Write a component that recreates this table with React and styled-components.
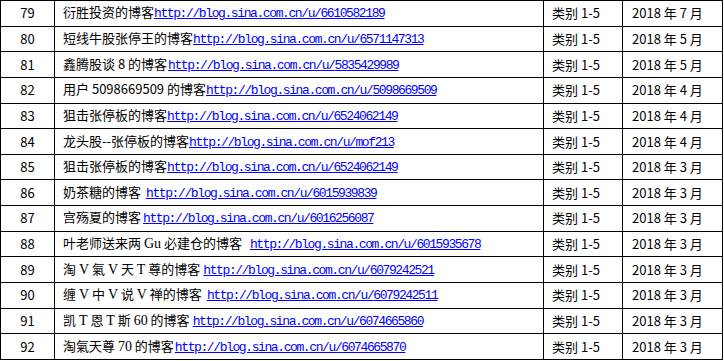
import React from 'react';
import styled, { createGlobalStyle } from 'styled-components';

const GlobalStyle = createGlobalStyle`
  html, body {
    margin: 0;
    padding: 0;
    background: #fff;
  }
  body {
    font-family: "Noto Sans CJK SC", "Liberation Sans", sans-serif;
    font-size: 13px;
    color: #000;
  }
`;

const Sheet = styled.table`
  border-collapse: collapse;
  table-layout: fixed;
  width: 723px;
  height: 360px;
`;

const Row = styled.tr`
  height: 25.64px;
`;

const Cell = styled.td`
  border: 1px solid #000;
  padding: 0 0 0 ${({ $pad }) => ($pad === undefined ? 8 : $pad)}px;
  text-align: ${({ $center }) => ($center ? 'center' : 'left')};
  vertical-align: middle;
  line-height: 16px;
  white-space: nowrap;
  overflow: hidden;
`;

const Link = styled.a`
  font-family: "Liberation Mono", "DejaVu Sans Mono", monospace;
  font-size: 13px;
  letter-spacing: -1.4px;
  color: #00f;
  text-decoration: underline;
  margin-left: ${({ $gap }) => $gap || 0}px;
`;

// the few latin bits that were typed in Times in the source doc
const Roman = styled.span`
  font-family: "Liberation Serif", serif;
  font-size: 14px;
`;

const rows = [
  { no: 79, name: '衍胜投资的博客', id: '6610582189', date: '2018 年 7 月' },
  { no: 80, name: '短线牛股张停王的博客', id: '6571147313', date: '2018 年 5 月' },
  { no: 81, name: '鑫腾股谈 8 的博客', id: '5835429989', date: '2018 年 5 月', gap: 1 },
  { no: 82, name: '用户 5098669509 的博客', id: '5098669509', date: '2018 年 4 月', gap: 0 },
  { no: 83, name: '狙击张停板的博客', id: '6524062149', date: '2018 年 4 月' },
  { no: 84, name: '龙头股--张停板的博客', id: 'mof213', date: '2018 年 4 月' },
  { no: 85, name: '狙击张停板的博客', id: '6524062149', date: '2018 年 3 月' },
  { no: 86, name: '奶茶糖的博客', id: '6015939839', date: '2018 年 3 月', gap: 5 },
  { no: 87, name: '宫殇夏的博客', id: '6016256087', date: '2018 年 3 月', gap: 2 },
  {
    no: 88,
    name: <>叶老师送来两 <Roman>Gu</Roman> 必建仓的博客</>,
    id: '6015935678',
    date: '2018 年 3 月',
    gap: 8,
  },
  {
    no: 89,
    name: <>淘 <Roman>V</Roman> 氣 <Roman>V</Roman> 天 <Roman>T</Roman> 尊的博客</>,
    id: '6079242521',
    date: '2018 年 3 月',
    gap: 3,
  },
  {
    no: 90,
    name: <>缠 <Roman>V</Roman> 中 <Roman>V</Roman> 说 <Roman>V</Roman> 禅的博客</>,
    id: '6079242511',
    date: '2018 年 3 月',
    gap: 5,
  },
  {
    no: 91,
    name: <>凯 <Roman>T</Roman> 恩 <Roman>T</Roman> 斯 <Roman>60</Roman> 的博客</>,
    id: '6074665860',
    date: '2018 年 3 月',
    gap: 3,
  },
  {
    no: 92,
    name: <>淘氣天尊 <Roman>70</Roman> 的博客</>,
    id: '6074665870',
    date: '2018 年 3 月',
    gap: 1,
  },
];

const App = () => (
  <>
    <GlobalStyle />
    <Sheet>
      <colgroup>
        <col style={{ width: 54 }} />
        <col style={{ width: 489 }} />
        <col style={{ width: 79 }} />
        <col style={{ width: 100 }} />
      </colgroup>
      <tbody>
        {rows.map(r => (
          <Row key={r.no}>
            <Cell $center $pad={0}>{r.no}</Cell>
            <Cell>
              {r.name}
              <Link $gap={r.gap} href={`http://blog.sina.com.cn/u/${r.id}`}>
                http://blog.sina.com.cn/u/{r.id}
              </Link>
            </Cell>
            <Cell>类别 1-5</Cell>
            <Cell $pad={9}>{r.date}</Cell>
          </Row>
        ))}
      </tbody>
    </Sheet>
  </>
);

export default App;
